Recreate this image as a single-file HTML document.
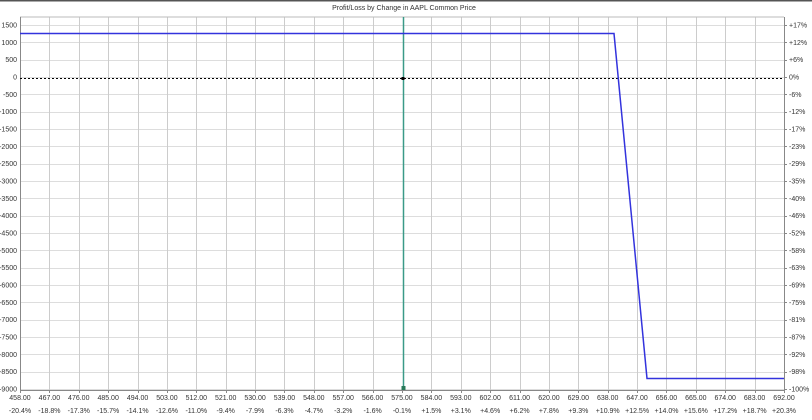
<!DOCTYPE html>
<html><head><style>
html,body{margin:0;padding:0;background:#fff;width:812px;height:420px;overflow:hidden}
text{font-family:"Liberation Sans",sans-serif;font-size:7px;fill:#333}
</style></head><body>
<svg width="812" height="420" viewBox="0 0 812 420" xmlns="http://www.w3.org/2000/svg">
<rect x="0" y="0" width="812" height="1.5" fill="#555"/>
<text x="404" y="10" text-anchor="middle">Profit/Loss by Change in AAPL Common Price</text>
<g id="g"></g>
<line x1="20" y1="17" x2="784" y2="17" stroke="#bbb" stroke-width="1"/>
<line x1="20.5" y1="17" x2="20.5" y2="390" stroke="#888"/>
<line x1="784.5" y1="17" x2="784.5" y2="390" stroke="#888"/>
<line x1="20" y1="390.5" x2="785" y2="390.5" stroke="#888"/>
<line x1="20" y1="78.5" x2="784" y2="78.5" stroke="#000" stroke-dasharray="2,2"/>
<line x1="403.5" y1="17" x2="403.5" y2="390" stroke="#3a9a88" stroke-width="1.5"/>
<polyline points="20,33.5 614,33.5 647,378.5 784,378.5" fill="none" stroke="#3333dd" stroke-width="1.5"/>
<rect x="401.5" y="77" width="3" height="3" fill="#000"/>
<rect x="401.5" y="386" width="4" height="4" fill="#2a7a5a"/>
</svg>
<script>
var g=document.getElementById('g'),h='';
var R=['+17%','+12%','+6%','0%','-6%','-12%','-17%','-23%','-29%','-35%','-40%','-46%','-52%','-58%','-63%','-69%','-75%','-81%','-87%','-92%','-98%','-100%'];
for(var i=0;i<22;i++){var v=1500-500*i;var y=25+i*17.33;
h+='<line x1="20" x2="784" y1="'+(Math.round(y)+.5)+'" y2="'+(Math.round(y)+.5)+'" stroke="#ddd"/>';
h+='<text x="17" y="'+(y+2.5)+'" text-anchor="end">'+v+'</text>';
h+='<line x1="784" x2="787" y1="'+(Math.round(y)+.5)+'" y2="'+(Math.round(y)+.5)+'" stroke="#888"/>';
h+='<text x="789" y="'+(y+2.5)+'">'+R[i]+'</text>';}
var P=['-20.4%','-18.8%','-17.3%','-15.7%','-14.1%','-12.6%','-11.0%','-9.4%','-7.9%','-6.3%','-4.7%','-3.2%','-1.6%','-0.1%','+1.5%','+3.1%','+4.6%','+6.2%','+7.8%','+9.3%','+10.9%','+12.5%','+14.0%','+15.6%','+17.2%','+18.7%','+20.3%'];
for(var j=0;j<27;j++){var x=20+j*29.385;var xr=Math.round(x)+.5;
if(j>0&&j<26&&j!=13)h+='<line x1="'+xr+'" x2="'+xr+'" y1="17" y2="390" stroke="#ccc"/>';
h+='<line x1="'+xr+'" x2="'+xr+'" y1="390" y2="393" stroke="#888"/>';
h+='<text x="'+x+'" y="400" text-anchor="middle">'+(458+9*j).toFixed(2)+'</text>';
h+='<text x="'+x+'" y="413" text-anchor="middle">'+P[j]+'</text>';}
g.innerHTML=h;
</script>
</body></html>
